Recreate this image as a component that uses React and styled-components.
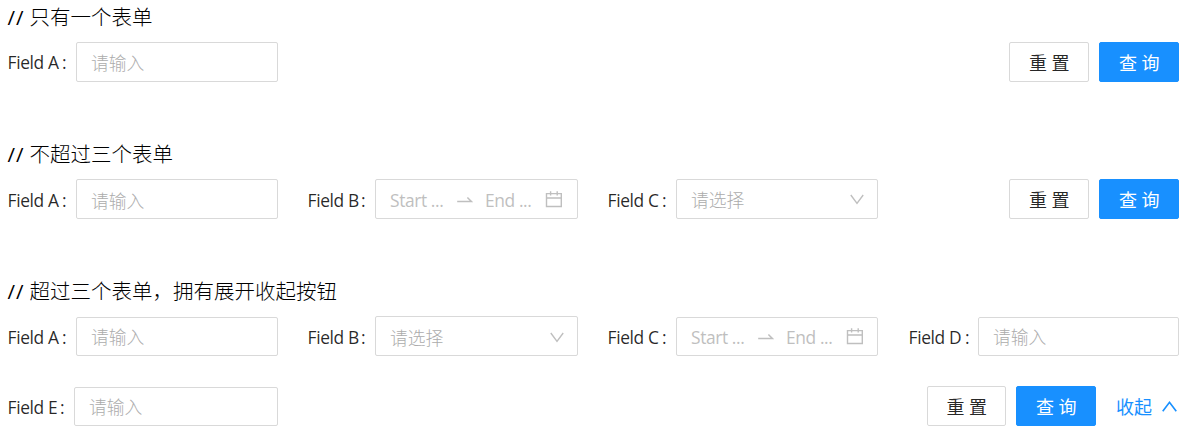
import React from "react";
import styled, { createGlobalStyle, css } from "styled-components";

const GlobalStyle = createGlobalStyle`
  * { box-sizing: border-box; }
  body {
    margin: 0;
    background: #fff;
    color: rgba(0, 0, 0, 0.85);
    font-family: "Open Sans", "Noto Sans CJK SC", sans-serif;
    font-size: 17.5px;
  }
`;

const Page = styled.main`
  width: 1190px;
  height: 445px;
  padding: 0 11px 0 8px;
  overflow: hidden;
`;

const Section = styled.section`
  height: ${(p) => p.$height}px;
`;

const Title = styled.h2`
  margin: 0;
  height: 42px;
  padding-top: 2px;
  color: #000;
  font-size: 20.5px;
  font-weight: 300;
  line-height: 30px;
  white-space: nowrap;
`;

const Slashes = styled.span`
  display: inline-block;
  width: 22px;
  margin-left: -0.5px;
  font-weight: 400;
  letter-spacing: 1px;
`;

const FormGrid = styled.div`
  display: grid;
  grid-template-columns: 270px 270px 270px 271px;
  column-gap: 30px;
  align-items: end;
  row-gap: 30px;
`;

const Item = styled.div`
  display: flex;
  align-items: center;
  height: 40px;
`;

const LabelText = styled.span`
  display: flex;
  flex: none;
  width: ${(p) => p.$width}px;
  height: 40px;
  line-height: 40px;
  padding-top: ${(p) => p.$top}px;
  padding-left: ${(p) => p.$inset}px;
  white-space: nowrap;
`;

const Name = styled.span`
  width: ${(p) => p.$width - 14}px;
  margin-left: -0.5px;
  font-size: 17.4px;
  letter-spacing: -0.35px;
`;

const Colon = styled.span`
  margin-left: 0.5px;
`;

const frame = css`
  flex: 1;
  min-width: 0;
  height: ${(p) => p.$height || 40}px;
  align-self: flex-end;
  border: 1px solid #d9d9d9;
  border-radius: 2px;
  background: #fff;
`;

const TextInput = styled.input`
  ${frame}
  padding: ${(p) => p.$top || 0}px 14px 0;
  outline: none;
  font: inherit;
  font-size: 17.8px;
  &::placeholder { color: #acacac; opacity: 1; font-weight: 300; }
`;

const Picker = styled.div`
  ${frame}
  display: flex;
  align-items: center;
  padding: ${(p) => p.$top}px ${(p) => p.$end || 14}px 0 14px;
  color: #bfbfbf;
  white-space: nowrap;
`;

const SelectValue = styled.span`
  flex: 1;
  color: #acacac;
  font-size: 17.8px;
  font-weight: 300;
`;

const DatePart = styled.span`
  width: ${(p) => p.$width}px;
  margin-left: ${(p) => p.$gap || 0}px;
  font-size: 17.4px;
  letter-spacing: -0.4px;
`;

const Icon = styled.svg`
  flex: none;
  display: block;
  fill: none;
  stroke: currentColor;
`;

const Actions = styled.div`
  grid-column: ${(p) => p.$column};
  display: flex;
  justify-content: flex-end;
  gap: 10px;
`;

const Button = styled.button`
  width: ${(p) => p.$width || 80}px;
  height: 40px;
  padding: 0 0 0 5px;
  border: 1px solid ${(p) => (p.$primary ? "#1890ff" : "#d9d9d9")};
  border-radius: 2px;
  background: ${(p) => (p.$primary ? "#1890ff" : "#fff")};
  color: ${(p) => (p.$primary ? "#fff" : "rgba(0, 0, 0, 0.85)")};
  font: inherit;
  font-size: 18px;
  letter-spacing: 4.5px;
`;

const Collapse = styled.a`
  display: flex;
  align-items: center;
  gap: 10px;
  height: 40px;
  margin-left: 10px;
  padding: 0 2px 0 0;
  color: #1890ff;
  font-size: 18px;
`;

const ArrowIcon = () => (
  <Icon width="16" height="16" viewBox="0 0 16 16" strokeWidth="1.5">
    <path d="M.2 9.5H14.4L10.4 5.5" />
  </Icon>
);

const CalendarIcon = () => (
  <Icon width="17" height="18" viewBox="0 0 17 18" strokeWidth="1.4">
    <path d="M1.5 2.6H16.3V15.5H1.5ZM1.5 7H16.3M5.6 .2V4.6M12.2.2V4.6" />
  </Icon>
);

const ChevronIcon = ({ up }) => (
  <Icon width={up ? 15 : 14} height="12" viewBox="0 0 14 12" preserveAspectRatio="none" strokeWidth={up ? 1.5 : 1.4}>
    <path d={up ? "M.7 11.2L7 2.4L13.3 11.2" : "M.8 2L7 10.3L13.2 2"} />
  </Icon>
);

const Field = ({ name, labelWidth, top = 1, inset = 0, children }) => (
  <Item>
    <LabelText $width={labelWidth} $top={top} $inset={inset}>
      <Name $width={labelWidth}>Field {name}</Name>
      <Colon>:</Colon>
    </LabelText>
    {children}
  </Item>
);

const Select = ({ top = 0 }) => (
  <Picker $top={top} $end={13}>
    <SelectValue>请选择</SelectValue>
    <ChevronIcon />
  </Picker>
);

const DateRange = ({ height, top = 2 }) => (
  <Picker $height={height} $top={top}>
    <DatePart $width={67}>Start ...</DatePart>
    <ArrowIcon />
    <DatePart $width={60} $gap={12}>End ...</DatePart>
    <CalendarIcon />
  </Picker>
);

export default function App() {
  return (
    <Page>
      <GlobalStyle />
      <Section $height={137}>
        <Title><Slashes>//</Slashes>只有一个表单</Title>
        <FormGrid>
          <Field name="A" labelWidth={68} top={0}><TextInput $top={1} placeholder="请输入" /></Field>
          <Actions $column="2 / 5">
            <Button>重置</Button>
            <Button $primary>查询</Button>
          </Actions>
        </FormGrid>
      </Section>
      <Section $height={137}>
        <Title><Slashes>//</Slashes>不超过三个表单</Title>
        <FormGrid>
          <Field name="A" labelWidth={68}><TextInput $top={3} placeholder="请输入" /></Field>
          <Field name="B" labelWidth={67}><DateRange /></Field>
          <Field name="C" labelWidth={68}><Select /></Field>
          <Actions $column="4">
            <Button>重置</Button>
            <Button $primary>查询</Button>
          </Actions>
        </FormGrid>
      </Section>
      <Section $height={171}>
        <Title><Slashes>//</Slashes>超过三个表单，拥有展开收起按钮</Title>
        <FormGrid>
          <Field name="A" labelWidth={68}><TextInput $height={39} $top={1} placeholder="请输入" /></Field>
          <Field name="B" labelWidth={67}><Select top={1} /></Field>
          <Field name="C" labelWidth={68}><DateRange height={39} top={1} /></Field>
          <Field name="D" labelWidth={70} inset={1}><TextInput $height={39} $top={1} placeholder="请输入" /></Field>
          <Field name="E" labelWidth={66}><TextInput $height={39} $top={1} placeholder="请输入" /></Field>
          <Actions $column="2 / 5">
            <Button $width={79}>重置</Button>
            <Button $primary>查询</Button>
            <Collapse>收起<ChevronIcon up /></Collapse>
          </Actions>
        </FormGrid>
      </Section>
    </Page>
  );
}
